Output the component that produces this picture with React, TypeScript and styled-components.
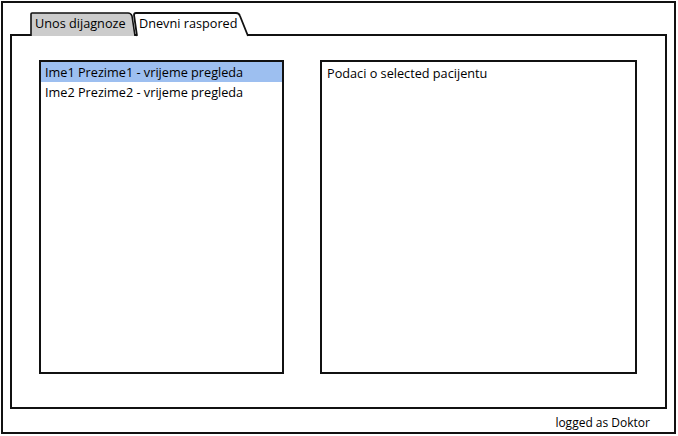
import React, { useState } from "react";
import styled, { createGlobalStyle } from "styled-components";

const Global = createGlobalStyle`
  html, body { margin: 0; padding: 0; background: #fff; }
  body { font-family: "Open Sans", "Liberation Sans", sans-serif; color: #000; }
  * { box-sizing: border-box; }
`;

const Window = styled.div`
  margin: 1px 0 0 1px;
  width: 675px;
  height: 433px;
  border: 2px solid #111;
  padding: 9px 7px 0 7px;
  display: flex;
  flex-direction: column;
`;

const TabBar = styled.div`
  display: flex;
  align-items: flex-end;
  height: 24px;
  padding-left: 20px;
  position: relative;
  z-index: 1;
  margin-bottom: -2px;
`;

const Tab = styled.div<{ $active?: boolean; $w: number }>`
  position: relative;
  width: ${(p) => p.$w}px;
  height: 24px;
  font-size: 12.7px;
  line-height: 23px;
  padding-left: ${(p) => (p.$active ? 6 : 5)}px;
  white-space: nowrap;
  margin-left: ${(p) => (p.$active ? -1 : 0)}px;
  cursor: pointer;
  & > svg {
    position: absolute;
    left: 0;
    top: 0;
    z-index: -1;
    overflow: visible;
  }
`;

const Panel = styled.div`
  height: 375px;
  border: 2px solid #111;
  padding: 24px 28px 0 27px;
  display: grid;
  grid-template-columns: 245px 317px;
  column-gap: 36px;
  align-items: start;
`;

const Box = styled.div`
  height: 314px;
  border: 2px solid #111;
  font-size: 12.7px;
`;

const Row = styled.div<{ $selected?: boolean }>`
  height: 20px;
  line-height: 20px;
  padding-left: 4px;
  white-space: nowrap;
  background: ${(p) => (p.$selected ? "#9dbff0" : "transparent")};
  cursor: pointer;
`;

const DetailText = styled.div`
  padding: 1px 0 0 5px;
  line-height: 20px;
`;

const Footer = styled.div`
  flex: 1;
  display: flex;
  justify-content: flex-end;
  align-items: center;
  padding-right: 17px;
  font-size: 12px;
  padding-top: 3px;
`;

const InactiveShape = () => (
  <svg width="106" height="24">
    <path
      d="M1 24 L1 2 Q1 1 2 1 L98 1 Q101 1 102 4 L105 24"
      fill="#cccccc"
      stroke="#111"
      strokeWidth="1.6"
    />
  </svg>
);

const ActiveShape = () => (
  <svg width="118" height="24">
    <path
      d="M4 24 L1 3 Q1 1 3 1 L103 1 Q106 1 107 4 L115 24"
      fill="#ffffff"
      stroke="#111"
      strokeWidth="1.8"
    />
  </svg>
);

const patients = [
  "Ime1 Prezime1 - vrijeme pregleda",
  "Ime2 Prezime2 - vrijeme pregleda",
];

export default function App() {
  const [sel, setSel] = useState(0);
  return (
    <>
      <Global />
      <Window>
        <TabBar>
          <Tab $w={104}>
            <InactiveShape />
            Unos dijagnoze
          </Tab>
          <Tab $active $w={116}>
            <ActiveShape />
            Dnevni raspored
          </Tab>
        </TabBar>
        <Panel>
          <Box>
            {patients.map((p, i) => (
              <Row key={p} $selected={i === sel} onClick={() => setSel(i)}>
                {p}
              </Row>
            ))}
          </Box>
          <Box>
            <DetailText>Podaci o selected pacijentu</DetailText>
          </Box>
        </Panel>
        <Footer>logged as Doktor</Footer>
      </Window>
    </>
  );
}
